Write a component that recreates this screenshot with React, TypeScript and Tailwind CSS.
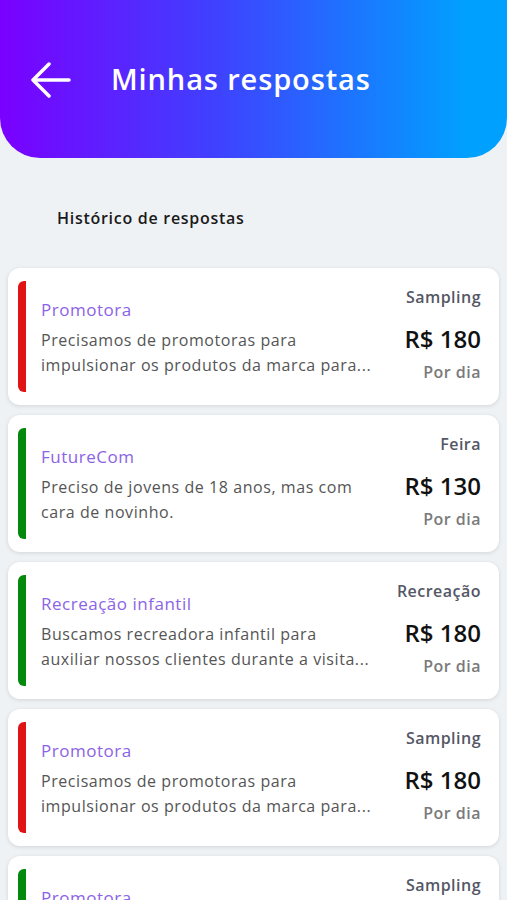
import React from 'react';

type Resposta = {
    title: string;
    lines: [string, string];
    category: string;
    price: number;
    active: boolean;
};

const respostas: Resposta[] = [
    {
        title: 'Promotora',
        lines: ['Precisamos de promotoras para', 'impulsionar os produtos da marca para...'],
        category: 'Sampling',
        price: 180,
        active: false,
    },
    {
        title: 'FutureCom',
        lines: ['Preciso de jovens de 18 anos, mas com', 'cara de novinho.'],
        category: 'Feira',
        price: 130,
        active: true,
    },
    {
        title: 'Recreação infantil',
        lines: ['Buscamos recreadora infantil para', 'auxiliar nossos clientes durante a visita...'],
        category: 'Recreação',
        price: 180,
        active: true,
    },
    {
        title: 'Promotora',
        lines: ['Precisamos de promotoras para', 'impulsionar os produtos da marca para...'],
        category: 'Sampling',
        price: 180,
        active: false,
    },
    {
        title: 'Promotora',
        lines: ['Precisamos de promotoras para', 'impulsionar os produtos da marca para...'],
        category: 'Sampling',
        price: 180,
        active: true,
    },
];

const RespostaCard = ({ title, lines, category, price, active }: Resposta) => {
    return (
        <div className="flex h-[137px] shrink-0 rounded-[12px] bg-white px-[10px] py-[13px] shadow-[0_1px_4px_rgba(0,0,0,0.12)]">
            {/* status bar */}
            <div className={`w-[8px] rounded-l-[6px] ${active ? 'bg-[#038A0C]' : 'bg-[#E01414]'}`} />

            <div className="flex min-w-0 flex-1 flex-col justify-center pl-[15px] pt-[3px]">
                <h3 className="text-[17px] font-medium leading-[24px] tracking-[0.03em] text-[#8B63E6]">{title}</h3>
                <p className="mt-[6px] whitespace-nowrap text-[16px] leading-[25px] tracking-[0.035em] text-[#555555]">
                    <span className="block">{lines[0]}</span>
                    <span className="block">{lines[1]}</span>
                </p>
            </div>

            <div className="flex flex-col items-end justify-center pb-[4px] pr-[8px]">
                <span className="text-[16px] font-semibold leading-[20px] tracking-[0.03em] text-[#545766]">{category}</span>
                <span className="mt-[17px] text-[24px] font-semibold leading-[30px] text-[#111111]">R$ {price}</span>
                <span className="mt-[7px] text-[16px] font-semibold leading-[22px] tracking-[0.03em] text-[#7A7A7A]">Por dia</span>
            </div>
        </div>
    );
};

export default function App() {
    return (
        <div
            className="flex h-[900px] w-[507px] flex-col overflow-hidden bg-[#EFF2F5]"
            style={{ fontFamily: '"Open Sans", "Liberation Sans", sans-serif' }}
        >
            {/* Header */}
            <header className="flex h-[158px] shrink-0 items-center gap-[40px] rounded-b-[40px] bg-linear-to-r/srgb from-[#7A00FF] via-[#4040FF] via-42% to-[#00A0FF] to-92% pl-[30px]">
                <svg width="41" height="36" viewBox="0 0 41 36" fill="none" className="mt-[2px]">
                    <path d="M39 18H3M19 2 3 18l16 16" stroke="white" strokeWidth="3.5" strokeLinecap="round" strokeLinejoin="round" />
                </svg>
                <h1 className="text-[29px] font-semibold tracking-[0.03em] text-white">Minhas respostas</h1>
            </header>

            <h2 className="mt-[48px] pl-[57px] text-[16px] font-semibold leading-[24px] tracking-[0.045em] text-[#1A1A1A]">Histórico de respostas</h2>

            {/* Lista */}
            <div className="mt-[38px] flex flex-col gap-[10px] px-[8px]">
                {respostas.map((r, i) => (
                    <RespostaCard key={i} {...r} />
                ))}
            </div>
        </div>
    );
}
